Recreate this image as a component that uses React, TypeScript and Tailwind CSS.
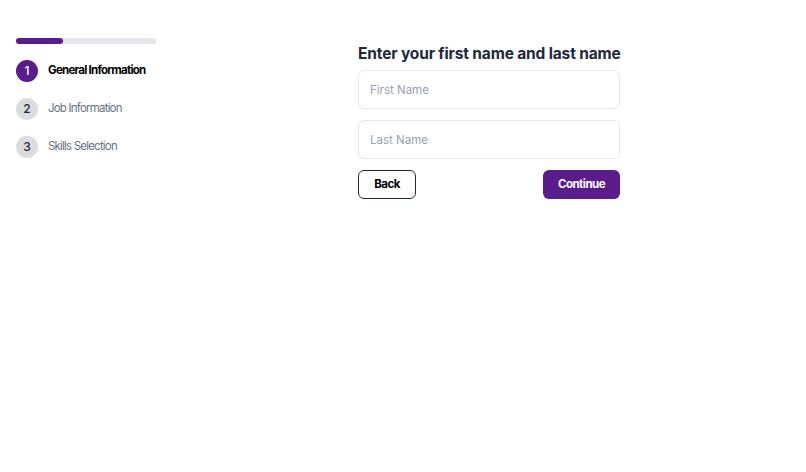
const steps = [
  { id: 1, label: "General Information" },
  { id: 2, label: "Job Information" },
  { id: 3, label: "Skills Selection" },
];

export default function App() {
  const current = 1;

  return (
    <div className="flex min-h-[472px] w-full bg-white font-['Inter',sans-serif] text-gray-800">
      {/* Sidebar */}
      <aside className="w-[172px] shrink-0 px-4 pt-[38px]">
        <div className="h-[6px] w-full rounded-full bg-[#e5e5ea]">
          <div className="h-full w-1/3 rounded-full bg-[#5a1c8a]" />
        </div>
        <ul className="mt-4 flex flex-col gap-4">
          {steps.map((step) => {
            const active = step.id === current;
            return (
              <li key={step.id} className="flex items-center gap-[10px]">
                <span
                  className={`flex h-[22px] w-[22px] items-center justify-center rounded-full text-[12px] font-medium ${
                    active ? "bg-[#5a1c8a] text-white" : "bg-[#dcdde1] text-gray-800"
                  }`}
                >
                  {step.id}
                </span>
                <span
                  className={`whitespace-nowrap text-[11.5px] ${
                    active
                      ? "font-bold tracking-[-0.75px] text-black"
                      : "tracking-[-0.8px] text-gray-500"
                  }`}
                >
                  {step.label}
                </span>
              </li>
            );
          })}
        </ul>
      </aside>

      {/* Form */}
      <main className="flex flex-1 justify-center pt-[42px]">
        <div className="w-[262px]">
          <h1 className="whitespace-nowrap text-[15.5px] font-bold leading-[24px] tracking-[-0.15px] text-gray-800">
            Enter your first name and last name
          </h1>
          <form className="mt-[4px] flex flex-col gap-[11px]">
            <input
              type="text"
              placeholder="First Name"
              className="h-[39px] w-full rounded-md border border-[#e6e6e9] px-[11px] text-[11.5px] placeholder:text-gray-400 focus:outline-none"
            />
            <input
              type="text"
              placeholder="Last Name"
              className="h-[39px] w-full rounded-md border border-[#e6e6e9] px-[11px] text-[11.5px] placeholder:text-gray-400 focus:outline-none"
            />
            <div className="flex items-center justify-between">
              <button
                type="button"
                className="h-[29px] w-[58px] rounded-md border border-gray-800 text-[11.5px] font-bold tracking-[-0.5px] text-black"
              >
                Back
              </button>
              <button
                type="submit"
                className="h-[29px] w-[77px] rounded-md bg-[#5a1c8a] text-[11.5px] font-bold tracking-[-0.5px] text-white"
              >
                Continue
              </button>
            </div>
          </form>
        </div>
      </main>
    </div>
  );
}
